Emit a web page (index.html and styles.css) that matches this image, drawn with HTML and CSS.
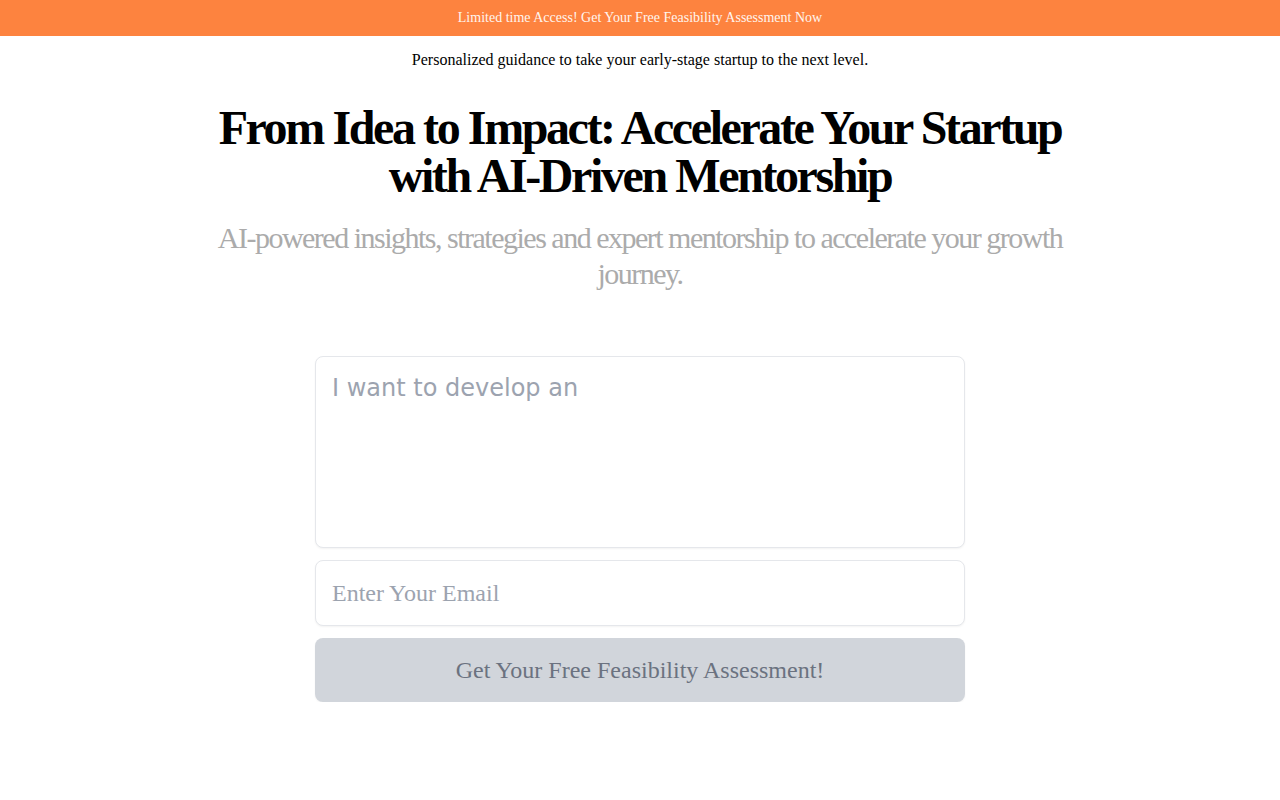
FILE: index.html
```html
<!DOCTYPE html>
<html lang="en">
<head>
<meta charset="utf-8">
<title>AI-Driven Mentorship</title>
<link rel="stylesheet" href="styles.css">
</head>
<body>
<div class="banner">Limited time Access! Get Your Free Feasibility Assessment Now</div>
<main class="hero">
  <p class="tagline">Personalized guidance to take your early-stage startup to the next level.</p>
  <h1 class="title">From Idea to Impact: Accelerate Your Startup with AI-Driven Mentorship</h1>
  <p class="lead">AI-powered insights, strategies and expert mentorship to accelerate your growth journey.</p>
  <form class="form">
    <textarea class="idea" placeholder="I want to develop an"></textarea>
    <input class="email" type="email" placeholder="Enter Your Email">
    <button class="submit" type="button">Get Your Free Feasibility Assessment!</button>
  </form>
</main>
</body>
</html>
```

FILE: styles.css
```css
* { box-sizing: border-box; }
html, body { margin: 0; padding: 0; }
body {
  font-family: "Liberation Serif", "Times New Roman", serif;
  background: #ffffff;
  color: #000;
}
.banner {
  height: 36px;
  background: #fd833f;
  color: #fff5ee;
  font-size: 14px;
  line-height: 36px;
  text-align: center;
}
.hero {
  max-width: 896px;
  margin: 0 auto;
  display: flex;
  flex-direction: column;
  align-items: center;
  text-align: center;
}
.tagline {
  margin: 12px 0 0;
  font-size: 16px;
  line-height: 24px;
}
.title {
  margin: 32px 0 0;
  font-size: 48px;
  line-height: 48px;
  font-weight: 700;
  letter-spacing: -2.4px;
}
.lead {
  margin: 20px 0 0;
  font-size: 30px;
  line-height: 36px;
  color: #ababab;
  letter-spacing: -1.5px;
}
.form {
  margin-top: 64px;
  width: 650px;
  display: flex;
  flex-direction: column;
  gap: 12px;
}
.idea, .email {
  width: 100%;
  border: 1px solid #e5e7eb;
  border-radius: 8px;
  background: #fff;
  padding: 16px;
  font-size: 24px;
  color: #111827;
  outline: none;
  box-shadow: 0 1px 2px rgba(0,0,0,0.05);
}
.idea {
  height: 192px;
  resize: none;
  font-family: "DejaVu Sans", sans-serif;
  line-height: 30px;
  display: block;
}
.email {
  height: 66px;
  font-family: "Liberation Serif", serif;
}
.idea::placeholder, .email::placeholder { color: #9ca3af; opacity: 1; }
.submit {
  height: 64px;
  border: none;
  border-radius: 8px;
  background: #d1d5db;
  color: #6b7280;
  font-family: "Liberation Serif", serif;
  font-size: 24px;
  box-shadow: 0 1px 2px rgba(0,0,0,0.05);
}
```
